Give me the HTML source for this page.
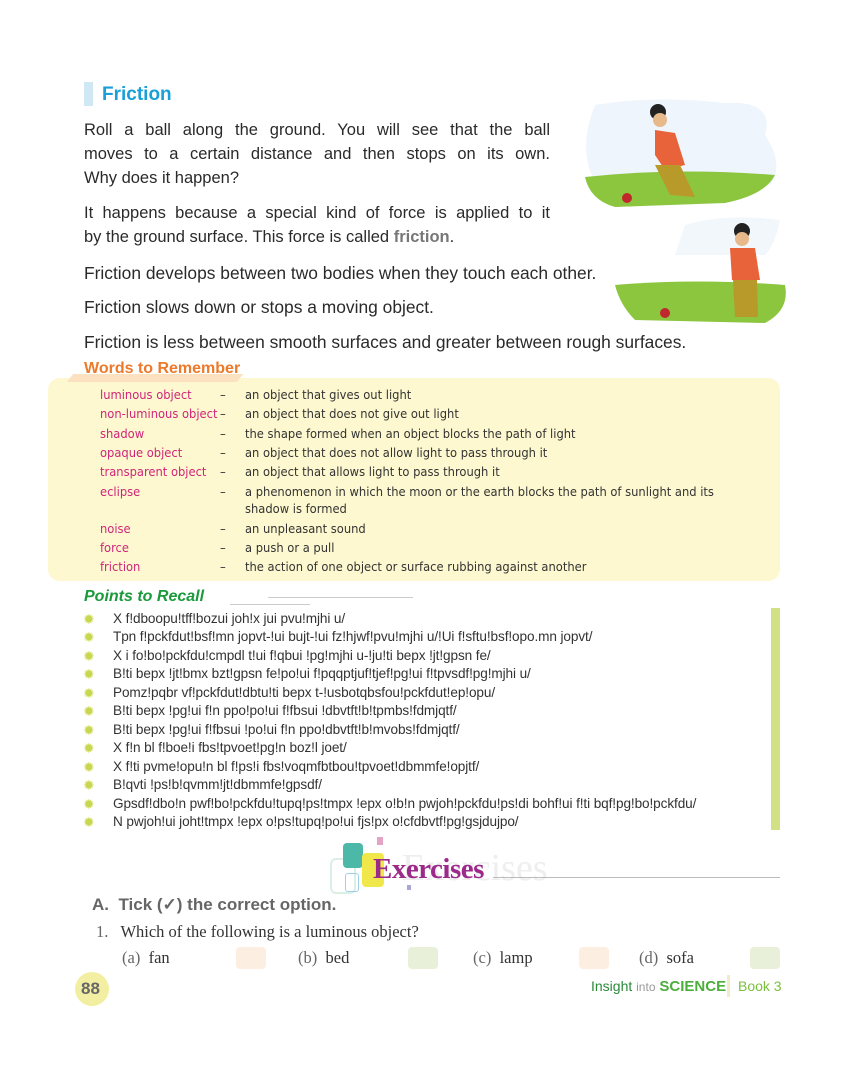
<!DOCTYPE html>
<html><head><meta charset="utf-8"><style>
body{margin:0;width:864px;height:1080px;background:#fff;position:relative;overflow:hidden;font-family:"Liberation Sans",sans-serif;color:#222}
.a{position:absolute;white-space:nowrap}
.p{font-size:17.4px;color:#2a2a2a}
.j{text-align:justify;text-align-last:justify;width:466px;font-size:16.5px}
.w{font-family:"DejaVu Sans Condensed","Liberation Sans Narrow",sans-serif;font-size:12.8px;color:#333}
.t{color:#d0257a}
.pt{font-size:13.6px;color:#333;letter-spacing:-0.1px}
.bl{position:absolute;left:83px;width:12px;height:12px;color:#c9d650;font-size:14px;line-height:12px}
.s{font-family:"Liberation Serif",serif;font-size:16.5px;color:#333}
.box{position:absolute;width:30px;height:22px;border-radius:4px}
</style></head><body>
<div class="a" style="left:84px;top:82px;width:9px;height:24px;background:#cfe8f4"></div>
<div class="a" style="left:102px;top:84px;font-size:19px;font-weight:bold;color:#1a9fd8">Friction</div>
<div class="a p j" style="left:84px;top:121px">Roll a ball along the ground. You will see that the ball</div>
<div class="a p j" style="left:84px;top:145px">moves to a certain distance and then stops on its own.</div>
<div class="a p" style="left:84px;top:169px;font-size:16.5px">Why does it happen?</div>
<div class="a p j" style="left:84px;top:204px">It happens because a special kind of force is applied to it</div>
<div class="a p" style="left:84px;top:228px;font-size:16.5px">by the ground surface. This force is called <b style="color:#777">friction</b>.</div>
<div class="a p" style="left:84px;top:263px">Friction develops between two bodies when they touch each other.</div>
<div class="a p" style="left:84px;top:297px">Friction slows down or stops a moving object.</div>
<div class="a p" style="left:84px;top:332px">Friction is less between smooth surfaces and greater between rough surfaces.</div>
<svg class="a" style="left:575px;top:95px" width="215" height="240">
<path d="M20 10 Q80 0 150 8 Q200 5 190 40 Q210 70 195 90 L25 95 Q0 60 20 10Z" fill="#eef5fc"/>
<path d="M10 82 Q100 72 200 80 Q190 100 150 108 L40 112 Q15 105 10 82Z" fill="#8cc63f"/>
<circle cx="52" cy="103" r="5" fill="#c0282d"/>
<circle cx="83" cy="17" r="8" fill="#222"/><circle cx="85" cy="25" r="7" fill="#e8b98a"/>
<path d="M80 35 L100 38 L110 70 L90 75 L80 60Z" fill="#e8633a"/>
<path d="M80 70 L105 70 L120 102 L95 100Z" fill="#b89a2a"/>
<path d="M110 130 Q150 118 205 125 Q200 150 190 160 L100 160Z" fill="#f2f7fc"/>
<path d="M40 190 Q120 183 210 190 Q215 215 190 228 L60 225 Q45 210 40 190Z" fill="#8cc63f"/>
<circle cx="90" cy="218" r="5" fill="#c0282d"/>
<circle cx="167" cy="136" r="8" fill="#222"/><circle cx="167" cy="144" r="7" fill="#e8b98a"/>
<path d="M155 153 L180 153 L185 185 L157 185Z" fill="#e8633a"/>
<path d="M158 185 L182 185 L183 222 L160 222Z" fill="#b89a2a"/>
</svg>
<div class="a" style="left:48px;top:378px;width:732px;height:203px;background:#fdf8cf;border-radius:12px"></div>
<div class="a" style="left:70px;top:374px;width:170px;height:8px;background:#fbe1c0;transform:skewX(-40deg)"></div>
<div class="a" style="left:84px;top:360px;font-size:16px;font-weight:bold;color:#ec7a2a">Words to Remember</div>
<div class="w">
<div class="a t" style="left:100px;top:388px">luminous object</div><div class="a" style="left:220px;top:388px">–</div><div class="a" style="left:245px;top:388px">an object that gives out light</div>
<div class="a t" style="left:100px;top:407px">non-luminous object</div><div class="a" style="left:220px;top:407px">–</div><div class="a" style="left:245px;top:407px">an object that does not give out light</div>
<div class="a t" style="left:100px;top:427px">shadow</div><div class="a" style="left:220px;top:427px">–</div><div class="a" style="left:245px;top:427px">the shape formed when an object blocks the path of light</div>
<div class="a t" style="left:100px;top:446px">opaque object</div><div class="a" style="left:220px;top:446px">–</div><div class="a" style="left:245px;top:446px">an object that does not allow light to pass through it</div>
<div class="a t" style="left:100px;top:465px">transparent object</div><div class="a" style="left:220px;top:465px">–</div><div class="a" style="left:245px;top:465px">an object that allows light to pass through it</div>
<div class="a t" style="left:100px;top:485px">eclipse</div><div class="a" style="left:220px;top:485px">–</div><div class="a" style="left:245px;top:485px">a phenomenon in which the moon or the earth blocks the path of sunlight and its</div>
<div class="a" style="left:245px;top:502px">shadow is formed</div>
<div class="a t" style="left:100px;top:522px">noise</div><div class="a" style="left:220px;top:522px">–</div><div class="a" style="left:245px;top:522px">an unpleasant sound</div>
<div class="a t" style="left:100px;top:541px">force</div><div class="a" style="left:220px;top:541px">–</div><div class="a" style="left:245px;top:541px">a push or a pull</div>
<div class="a t" style="left:100px;top:560px">friction</div><div class="a" style="left:220px;top:560px">–</div><div class="a" style="left:245px;top:560px">the action of one object or surface rubbing against another</div>
</div>
<div class="a" style="left:84px;top:588px;font-size:16px;font-weight:bold;font-style:italic;color:#1a9a3a">Points to Recall</div>
<div class="a" style="left:230px;top:604px;width:80px;height:1px;background:#ccc"></div>
<div class="a" style="left:268px;top:597px;width:145px;height:1px;background:#ccc"></div>
<div class="a" style="left:771px;top:608px;width:9px;height:222px;background:#d2e183"></div>
<div class="pt">
<div class="bl" style="top:613px">✹</div><div class="a" style="left:113px;top:611px">X f!dboopu!tff!bozui joh!x jui pvu!mjhi u/</div>
<div class="bl" style="top:631px">✹</div><div class="a" style="left:113px;top:629px">Tpn f!pckfdut!bsf!mn jopvt-!ui bujt-!ui fz!hjwf!pvu!mjhi u/!Ui f!sftu!bsf!opo.mn jopvt/</div>
<div class="bl" style="top:650px">✹</div><div class="a" style="left:113px;top:648px">X i fo!bo!pckfdu!cmpdl t!ui f!qbui !pg!mjhi u-!ju!ti bepx !jt!gpsn fe/</div>
<div class="bl" style="top:668px">✹</div><div class="a" style="left:113px;top:666px">B!ti bepx !jt!bmx bzt!gpsn fe!po!ui f!pqqptjuf!tjef!pg!ui f!tpvsdf!pg!mjhi u/</div>
<div class="bl" style="top:687px">✹</div><div class="a" style="left:113px;top:685px">Pomz!pqbr vf!pckfdut!dbtu!ti bepx t-!usbotqbsfou!pckfdut!ep!opu/</div>
<div class="bl" style="top:705px">✹</div><div class="a" style="left:113px;top:703px">B!ti bepx !pg!ui f!n ppo!po!ui f!fbsui !dbvtft!b!tpmbs!fdmjqtf/</div>
<div class="bl" style="top:724px">✹</div><div class="a" style="left:113px;top:722px">B!ti bepx !pg!ui f!fbsui !po!ui f!n ppo!dbvtft!b!mvobs!fdmjqtf/</div>
<div class="bl" style="top:742px">✹</div><div class="a" style="left:113px;top:740px">X f!n bl f!boe!i fbs!tpvoet!pg!n boz!l joet/</div>
<div class="bl" style="top:761px">✹</div><div class="a" style="left:113px;top:759px">X f!ti pvme!opu!n bl f!ps!i fbs!voqmfbtbou!tpvoet!dbmmfe!opjtf/</div>
<div class="bl" style="top:779px">✹</div><div class="a" style="left:113px;top:777px">B!qvti !ps!b!qvmm!jt!dbmmfe!gpsdf/</div>
<div class="bl" style="top:798px">✹</div><div class="a" style="left:113px;top:796px">Gpsdf!dbo!n pwf!bo!pckfdu!tupq!ps!tmpx !epx o!b!n pwjoh!pckfdu!ps!di bohf!ui f!ti bqf!pg!bo!pckfdu/</div>
<div class="bl" style="top:816px">✹</div><div class="a" style="left:113px;top:814px">N pwjoh!ui joht!tmpx !epx o!ps!tupq!po!ui fjs!px o!cfdbvtf!pg!gsjdujpo/</div>
</div>
<div class="a" style="left:377px;top:837px;width:6px;height:8px;background:#e6a3c8"></div>
<div class="a" style="left:330px;top:858px;width:22px;height:32px;border:2px solid #dcefe6;border-radius:6px"></div>
<div class="a" style="left:343px;top:843px;width:20px;height:25px;background:#4bb8a8;border-radius:4px"></div>
<div class="a" style="left:362px;top:853px;width:22px;height:34px;background:#f0e84a;border-radius:4px"></div>
<div class="a" style="left:345px;top:873px;width:12px;height:17px;border:1px solid #9fd0ea;border-radius:3px"></div>
<div class="a" style="left:407px;top:885px;width:4px;height:5px;background:#a6a6d8"></div>
<div class="a" style="left:402px;top:846px;font-family:'Liberation Serif',serif;font-size:38px;color:#eee">Exercises</div>
<div class="a" style="left:373px;top:853px;font-family:'Liberation Serif',serif;font-size:29px;font-weight:bold;color:#9c2a8a;letter-spacing:-0.5px">Exercises</div>
<div class="a" style="left:493px;top:877px;width:287px;height:1px;background:#bbb"></div>
<div class="a" style="left:92px;top:895px;font-size:17px;font-weight:bold;color:#666">A.&nbsp; Tick (✓) the correct option.</div>
<div class="a s" style="left:96px;top:922px"><span style="color:#666">1.</span>&nbsp;&nbsp; Which of the following is a luminous object?</div>
<div class="a s" style="left:122px;top:948px"><span style="color:#666">(a)</span>&nbsp; fan</div>
<div class="a s" style="left:298px;top:948px"><span style="color:#666">(b)</span>&nbsp; bed</div>
<div class="a s" style="left:473px;top:948px"><span style="color:#666">(c)</span>&nbsp; lamp</div>
<div class="a s" style="left:639px;top:948px"><span style="color:#666">(d)</span>&nbsp; sofa</div>
<div class="box" style="left:236px;top:947px;background:#fdeee2"></div>
<div class="box" style="left:408px;top:947px;background:#e8f0da"></div>
<div class="box" style="left:579px;top:947px;background:#fdeee2"></div>
<div class="box" style="left:750px;top:947px;background:#e8f0da"></div>
<div class="a" style="left:75px;top:972px;width:34px;height:34px;border-radius:50%;background:#f3efa2"></div>
<div class="a" style="left:81px;top:979px;font-size:17px;font-weight:bold;color:#666">88</div>
<div class="a" style="left:591px;top:978px;font-size:14px;color:#2b8a3a">Insight <span style="color:#999;font-size:12px">into</span> <b style="color:#4cae3c;font-size:15px">SCIENCE</b></div>
<div class="a" style="left:727px;top:975px;width:3px;height:22px;background:#f0ecc8"></div>
<div class="a" style="left:738px;top:978px;font-size:14px;color:#7cbf3c">Book 3</div>
</body></html>
